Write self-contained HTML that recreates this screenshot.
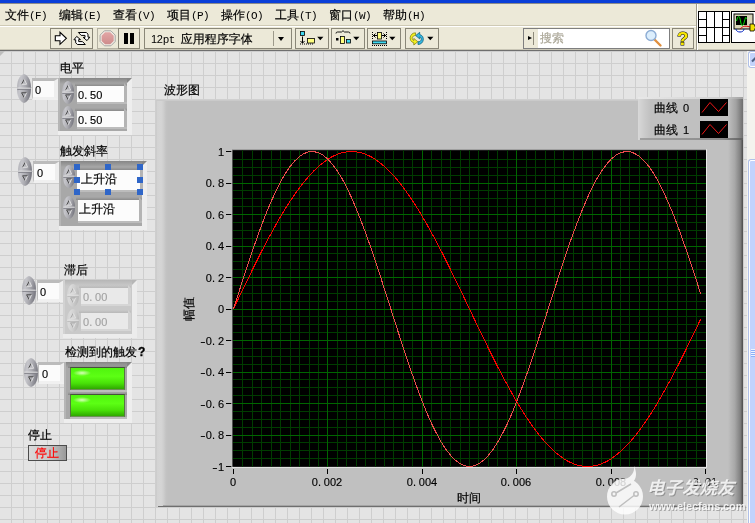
<!DOCTYPE html><html><head><meta charset="utf-8"><title>LabVIEW</title><style>
*{box-sizing:border-box}
html,body{margin:0;padding:0}
body{width:755px;height:523px;overflow:hidden;position:relative;background:#ECE9D8;font-family:"Liberation Mono","WenQuanYi Zen Hei",sans-serif;font-size:12px;line-height:12px;color:#000}
.a{position:absolute}
.m{font-size:11px;letter-spacing:-0.6px;-webkit-text-stroke:0}
.p{letter-spacing:2.9px}
.n{display:inline-block;width:6px;text-align:center;transform:scaleX(1.45)}
.d{font-family:"Liberation Sans",sans-serif;font-size:11px}
.t{position:absolute;white-space:nowrap;height:12px;line-height:12px;will-change:transform;-webkit-text-stroke:0.2px currentColor}
.tb{position:absolute;top:28px;height:21px;border:1px solid #8A8778;background:#ECE9D8}
#panel{position:absolute;left:0;top:51px;width:747px;height:472px;background-color:#E4E4E4;
 background-image:linear-gradient(to right,#CECECE 1px,transparent 1px),linear-gradient(to bottom,#CECECE 1px,transparent 1px);
 background-size:12px 12px;background-position:-1px 0px}
.fld{position:absolute;background:#FCFCFC}
.idx{position:absolute;width:27px;height:22px;background:#FBFBFB;border-top:3px solid #BBBBBB;border-left:1px solid #BEBEBE;border-right:5px solid #EEEEEE;border-bottom:3px solid #F0F0F0}
.h{position:absolute;width:6px;height:6px;background:#2F66C8}
</style></head><body>
<div class="a" style="left:0;top:0;width:755px;height:3px;background:#0A3FD9"></div>
<div class="a" style="left:0;top:3px;width:755px;height:1px;background:#8C8C8C"></div>
<div class="t" style="left:5px;top:10px">文件<span class="m">(F)</span></div>
<div class="t" style="left:59px;top:10px">编辑<span class="m">(E)</span></div>
<div class="t" style="left:113px;top:10px">查看<span class="m">(V)</span></div>
<div class="t" style="left:167px;top:10px">项目<span class="m">(P)</span></div>
<div class="t" style="left:221px;top:10px">操作<span class="m">(O)</span></div>
<div class="t" style="left:275px;top:10px">工具<span class="m">(T)</span></div>
<div class="t" style="left:329px;top:10px">窗口<span class="m">(W)</span></div>
<div class="t" style="left:383px;top:10px">帮助<span class="m">(H)</span></div>
<div class="a" style="left:0;top:25px;width:697px;height:1px;background:#CFCAB5"></div>
<div class="a" style="left:0;top:26px;width:697px;height:1px;background:#FFFFFF"></div>
<div class="a" style="left:0;top:49px;width:755px;height:1px;background:#C9C6B6"></div>
<div class="a" style="left:0;top:50px;width:755px;height:1px;background:#6F6F6F"></div>
<div class="tb" style="left:50px;width:22px"><svg class="a" style="left:0;top:0" width="20" height="19" viewBox="51 29 20 19"><path d="M55.300 35.800H60V32.300L66.400 38.300L60 44.300V40.800H55.300Z" fill="#fff" stroke="#000" stroke-width="1.100"/></svg></div>
<div class="tb" style="left:71px;width:22px"><svg class="a" style="left:0;top:0" width="20" height="19" viewBox="72 29 20 19"><path d="M78.400 32.500H86.300L88 34.200V37.200H89.800L87 40.600L83.200 37.400H85V35.400H81.200Z" fill="#fff" stroke="#000" stroke-width="1" stroke-linejoin="round"/><path d="M85.300 44.500H77.400L75.700 42.800V39.800H73.900L76.700 36.400L80.500 39.600H78.700V41.600H82.500Z" fill="#fff" stroke="#000" stroke-width="1" stroke-linejoin="round"/></svg></div>
<div class="tb" style="left:97px;width:22px;border-color:#B4B1A2"><svg class="a" style="left:0;top:0" width="20" height="19" viewBox="98 29 20 19"><defs><linearGradient id="ab" x1="0" y1="0" x2="0" y2="1"><stop offset="0" stop-color="#E2A6A6"/><stop offset="1" stop-color="#CE8C8C"/></linearGradient></defs><path d="M104.400 30.800H110.900L115.200 35.100V41.500L110.900 45.800H104.400L100.100 41.500V35.100Z" fill="#F2EEE6" stroke="#9C9C9C" stroke-width="0.900"/><path d="M105 32.300H110.300L113.700 35.700V40.900L110.300 44.300H105L101.600 40.900V35.700Z" fill="url(#ab)"/></svg></div>
<div class="tb" style="left:118px;width:22px"><div class="a" style="left:5px;top:4px;width:3.500px;height:10.500px;background:#000"></div><div class="a" style="left:11.200px;top:4px;width:3.500px;height:10.500px;background:#000"></div></div>
<div class="tb" style="left:144px;width:148px"><div class="t" style="left:6px;top:4px"><span class="d" style="-webkit-text-stroke:0;letter-spacing:-0.300px">12</span><span class="m">pt&nbsp;</span>应用程序字体</div><div class="a" style="left:128px;top:2px;width:1px;height:15px;background:#9D9A8B"></div><div class="a" style="left:133px;top:8px;width:0;height:0;border-left:3.500px solid transparent;border-right:3.500px solid transparent;border-top:4px solid #000"></div></div>
<div class="tb" style="left:295px;width:34px"><svg class="a" style="left:0;top:0" width="32" height="19" viewBox="296 29 32 19"><rect x="300.500" y="31.500" width="4" height="4" fill="#3FD8F0" stroke="#000" stroke-width="0.800"/><path d="M302.500 36.500V43M300.500 41l2 2.200 2-2.200" stroke="#000" stroke-width="1" fill="none"/><path d="M300 44h14" stroke="#000" stroke-width="1" stroke-dasharray="1 1"/><rect x="307.500" y="38.500" width="7" height="4.500" fill="#FFFF80" stroke="#000" stroke-width="0.800"/><path d="M317.2 36.700h6.200l-3.100 3.500z" fill="#000"/></svg></div>
<div class="tb" style="left:331px;width:34px"><svg class="a" style="left:0;top:0" width="32" height="19" viewBox="332 29 32 19"><path d="M336 33.500q0-1.500 1.500-1.500h4l1.500-1.300 1.500 1.300h4q1.500 0 1.500 1.500" stroke="#000" stroke-width="0.900" fill="none"/><rect x="336" y="38" width="2.500" height="2.500" fill="#000"/><rect x="340.500" y="36.500" width="4" height="7" fill="#FFFF80" stroke="#000" stroke-width="0.800"/><rect x="346.500" y="39.500" width="4" height="3.500" fill="#3FD8F0" stroke="#000" stroke-width="0.800"/><path d="M353.2 36.700h6.200l-3.100 3.500z" fill="#000"/></svg></div>
<div class="tb" style="left:367px;width:34px"><svg class="a" style="left:0;top:0" width="32" height="19" viewBox="368 29 32 19"><path d="M372.500 32v7M386.500 32v7" stroke="#000" stroke-width="1" stroke-dasharray="1 1"/><path d="M373 35.500h4M386 35.500h-4M375.500 33.500l-2 2 2 2M383.500 33.500l2 2-2 2" stroke="#000" stroke-width="1" fill="none"/><rect x="377.500" y="32.500" width="4" height="6.500" fill="#FFFF80" stroke="#000" stroke-width="0.800"/><rect x="372.500" y="41" width="14" height="2.800" fill="#3FD8F0" stroke="#000" stroke-width="0.800"/><path d="M372 45.500h15" stroke="#000" stroke-width="1" stroke-dasharray="1 1"/><path d="M389.2 36.700h6.200l-3.100 3.500z" fill="#000"/></svg></div>
<div class="tb" style="left:405px;width:34px"><svg class="a" style="left:0;top:0" width="32" height="19" viewBox="406 29 32 19"><path d="M415.500 32.800c-6 0-7.500 8.500-1.700 10v2.200l4-3.300-4-3.300v2.100c-2.500-1-2-5 1.700-5z" fill="#F4F020" stroke="#77770A" stroke-width="0.700"/><path d="M418 44.500c6 0 7.500-8.500 1.700-10v-2.200l-4 3.300 4 3.300v-2.100c2.500 1 2 5-1.700 5z" fill="#38B8E0" stroke="#005878" stroke-width="0.700"/><path d="M427.2 36.700h6.200l-3.100 3.500z" fill="#000"/></svg></div>
<div class="tb" style="left:523px;width:147px;background:#fff;border-color:#7F7F7F"><div class="a" style="left:0;top:0;width:14px;height:19px;background:#ECE9D8"></div><div class="a" style="left:4px;top:7px;width:0;height:0;border-top:2.500px solid transparent;border-bottom:2.500px solid transparent;border-left:4px solid #000"></div><div class="a" style="left:9px;top:3px;width:1px;height:13px;background:#8E8B7C"></div><div class="t" style="left:16px;top:4px;color:#ACA899">搜索</div><svg class="a" style="left:120px;top:0px" width="20" height="19" viewBox="0 0 20 19"><path d="M10 10l6.500 6.500" stroke="#E09040" stroke-width="2.400" stroke-linecap="round"/><circle cx="7" cy="6.500" r="5" fill="#DCEEFC" stroke="#8CACD4" stroke-width="1.400"/></svg></div>
<div class="tb" style="left:672px;width:22px"><div class="t d" style="left:4px;top:0px;height:19px;line-height:19px;font-weight:bold;font-size:19px;color:#F8E800;-webkit-text-stroke:1px #000;paint-order:stroke fill">?</div></div>
<div class="a" style="left:696px;top:4px;width:1px;height:46px;background:#9D9A8B"></div><div class="a" style="left:697px;top:4px;width:1px;height:46px;background:#fff"></div>
<svg class="a" style="left:698px;top:11px" width="32" height="32" viewBox="0 0 32 32"><rect x="0.500" y="0.500" width="31" height="31" fill="#fff" stroke="#000"/><path d="M8.500 0v32M16.500 0v32M24.500 0v32M0 16.500h32M0 8.500h8.500M0 24.500h8.500M24.500 8.500h8M24.500 24.500h8" stroke="#000" stroke-width="1" fill="none"/></svg>
<svg class="a" style="left:731px;top:11px" width="32" height="32" viewBox="0 0 32 32"><rect x="0.500" y="0.500" width="31" height="31" fill="#fff" stroke="#000"/><rect x="3" y="3" width="19" height="15" fill="#D8D4B8" stroke="#000" stroke-width="1"/><rect x="5" y="5" width="11" height="9" fill="#000"/><path d="M5.500 10c1.500-6 3-6 4 0s2.500 6 4 0 1.500-3 2-2" stroke="#00E000" stroke-width="1" fill="none"/><path d="M5 18c0 4 8 4 8 0" stroke="#0020C0" stroke-width="1" fill="none"/><path d="M9 18c2-2 4-4 10-2" stroke="#E00000" stroke-width="1" fill="none"/><path d="M19 13h4l1.500 3.500-1.500 3.500h-4z" fill="#F0E000" stroke="#000" stroke-width="0.800"/></svg>
<div id="panel"></div>
<div class="a" style="left:0;top:51px;width:0;height:0;border-top:5px solid #BEBEBE;border-right:5px solid transparent"></div>
<div class="a" style="left:747px;top:51px;width:8px;height:472px;background:#F4F3EE"></div>
<div class="a" style="left:749px;top:52px;width:17px;height:15px;background:#C3D3FB;border:1px solid #fff;border-radius:2px;box-shadow:0 0 0 1px #B0C0E8"></div>
<svg class="a" style="left:749px;top:52px" width="6" height="15" viewBox="0 0 6 15"><path d="M3 9.5l5-5" stroke="#4D6185" stroke-width="2" fill="none"/></svg>
<div class="a" style="left:749px;top:160px;width:17px;height:370px;background:#C3D3FD;border:1px solid #fff;border-radius:2px;box-shadow:0 0 0 1px #B0C0E8"></div>
<div class="a" style="left:751px;top:349px;width:4px;height:1px;background:#EEF4FE;box-shadow:0 1px 0 #8CB0F8,0 2px 0 #EEF4FE,0 3px 0 #8CB0F8,0 4px 0 #EEF4FE,0 5px 0 #8CB0F8,0 6px 0 #EEF4FE,0 7px 0 #8CB0F8"></div>
<div class="t" style="left:60px;top:63px;color:#000;">电平</div>
<div class="idx" style="left:32px;top:78px"></div>
<svg class="a" style="left:17px;top:74px" width="14" height="29" viewBox="0 0 14 29"><defs><linearGradient id="g17_74" x1="0" y1="0" x2="1" y2="0.25"><stop offset="0" stop-color="#AAAAB0"/><stop offset="0.3" stop-color="#C6C6CB"/><stop offset="0.65" stop-color="#AAAAB0"/><stop offset="1" stop-color="#7E7E86"/></linearGradient></defs><path d="M7.0 0 C12.04 1.305 14 7.83 14 14.5 C14 21.169999999999998 12.04 27.695 7.0 29 C1.9600000000000002 27.695 0 21.169999999999998 0 14.5 C0 7.83 1.9600000000000002 1.305 7.0 0Z" fill="url(#g17_74)"/><rect x="0.3" y="13.7" width="13.4" height="1.1" fill="#ECECEC"/><rect x="0.3" y="14.8" width="13.4" height="1" fill="#7E7E86"/><path d="M7.3 5.22 L4.6 10.219999999999999" stroke="#4A4A4A" stroke-width="1" fill="none"/><path d="M7.3 5.22 L9.6 10.219999999999999 L4.6 10.219999999999999" stroke="#E8E8E8" stroke-width="0.9" fill="none"/><path d="M4.6 18.78 L9.6 18.78 M4.6 18.78 L7.3 23.78" stroke="#4A4A4A" stroke-width="1" fill="none"/><path d="M9.6 18.78 L7.3 23.78" stroke="#E8E8E8" stroke-width="0.9" fill="none"/></svg>
<div class="t d" style="left:34.8px;top:84.3px;color:#000;-webkit-text-stroke:0.15px #000;">0</div>
<div class="a" style="left:58px;top:78px;width:74px;height:57px;background:#EEEEEE"></div>
<div class="a" style="left:58px;top:78px;width:69px;height:53px;background:linear-gradient(to bottom,#868686 0,#A2A2A2 5px,#A8A8A8 6px,#A8A8A8 100%);border-left:2px solid #B6B6B6"></div>
<div class="a" style="left:127px;top:78px;width:0;height:0;border-top:5px solid #868686;border-right:5px solid transparent"></div>
<div class="a" style="left:75px;top:83px;width:52px;height:3px;background:linear-gradient(to bottom,#8A8A8A00,#8A8A8A)"></div>
<div class="a" style="left:77px;top:102px;width:50px;height:2px;background:#BCBCBC"></div>
<div class="a" style="left:124px;top:86px;width:3px;height:16px;background:#B4B4B4"></div>
<div class="a" style="left:124px;top:83px;width:0;height:0;border-bottom:3px solid #B4B4B4;border-right:3px solid transparent"></div>
<div class="fld" style="left:77px;top:86px;width:47px;height:16px;background:#FCFCFC"></div>
<svg class="a" style="left:62px;top:81px" width="12" height="23" viewBox="0 0 12 23"><defs><linearGradient id="g62_81" x1="0" y1="0" x2="1" y2="0.25"><stop offset="0" stop-color="#AAAAB0"/><stop offset="0.3" stop-color="#C6C6CB"/><stop offset="0.65" stop-color="#AAAAB0"/><stop offset="1" stop-color="#7E7E86"/></linearGradient></defs><path d="M6.0 0 C10.32 1.035 12 6.210000000000001 12 11.5 C12 16.79 10.32 21.965 6.0 23 C1.6800000000000002 21.965 0 16.79 0 11.5 C0 6.210000000000001 1.6800000000000002 1.035 6.0 0Z" fill="url(#g62_81)"/><rect x="0.3" y="10.7" width="11.4" height="1.1" fill="#ECECEC"/><rect x="0.3" y="11.8" width="11.4" height="1" fill="#7E7E86"/><path d="M6.3 4.14 L3.6 9.14" stroke="#4A4A4A" stroke-width="1" fill="none"/><path d="M6.3 4.14 L8.6 9.14 L3.6 9.14" stroke="#E8E8E8" stroke-width="0.9" fill="none"/><path d="M3.6 13.86 L8.6 13.86 M3.6 13.86 L6.3 18.86" stroke="#4A4A4A" stroke-width="1" fill="none"/><path d="M8.6 13.86 L6.3 18.86" stroke="#E8E8E8" stroke-width="0.9" fill="none"/></svg>
<div class="t d" style="left:77.8px;top:89px;color:#000;-webkit-text-stroke:0.15px #000;">0<span class="p">.</span>50</div>
<div class="a" style="left:75px;top:108px;width:52px;height:3px;background:linear-gradient(to bottom,#8A8A8A00,#8A8A8A)"></div>
<div class="a" style="left:77px;top:127px;width:50px;height:2px;background:#BCBCBC"></div>
<div class="a" style="left:124px;top:111px;width:3px;height:16px;background:#B4B4B4"></div>
<div class="a" style="left:124px;top:108px;width:0;height:0;border-bottom:3px solid #B4B4B4;border-right:3px solid transparent"></div>
<div class="fld" style="left:77px;top:111px;width:47px;height:16px;background:#FCFCFC"></div>
<svg class="a" style="left:62px;top:106px" width="12" height="23" viewBox="0 0 12 23"><defs><linearGradient id="g62_106" x1="0" y1="0" x2="1" y2="0.25"><stop offset="0" stop-color="#AAAAB0"/><stop offset="0.3" stop-color="#C6C6CB"/><stop offset="0.65" stop-color="#AAAAB0"/><stop offset="1" stop-color="#7E7E86"/></linearGradient></defs><path d="M6.0 0 C10.32 1.035 12 6.210000000000001 12 11.5 C12 16.79 10.32 21.965 6.0 23 C1.6800000000000002 21.965 0 16.79 0 11.5 C0 6.210000000000001 1.6800000000000002 1.035 6.0 0Z" fill="url(#g62_106)"/><rect x="0.3" y="10.7" width="11.4" height="1.1" fill="#ECECEC"/><rect x="0.3" y="11.8" width="11.4" height="1" fill="#7E7E86"/><path d="M6.3 4.14 L3.6 9.14" stroke="#4A4A4A" stroke-width="1" fill="none"/><path d="M6.3 4.14 L8.6 9.14 L3.6 9.14" stroke="#E8E8E8" stroke-width="0.9" fill="none"/><path d="M3.6 13.86 L8.6 13.86 M3.6 13.86 L6.3 18.86" stroke="#4A4A4A" stroke-width="1" fill="none"/><path d="M8.6 13.86 L6.3 18.86" stroke="#E8E8E8" stroke-width="0.9" fill="none"/></svg>
<div class="t d" style="left:77.8px;top:114px;color:#000;-webkit-text-stroke:0.15px #000;">0<span class="p">.</span>50</div>
<div class="t" style="left:60px;top:146px;color:#000;">触发斜率</div>
<div class="idx" style="left:33px;top:161px"></div>
<svg class="a" style="left:18px;top:157px" width="14" height="29" viewBox="0 0 14 29"><defs><linearGradient id="g18_157" x1="0" y1="0" x2="1" y2="0.25"><stop offset="0" stop-color="#AAAAB0"/><stop offset="0.3" stop-color="#C6C6CB"/><stop offset="0.65" stop-color="#AAAAB0"/><stop offset="1" stop-color="#7E7E86"/></linearGradient></defs><path d="M7.0 0 C12.04 1.305 14 7.83 14 14.5 C14 21.169999999999998 12.04 27.695 7.0 29 C1.9600000000000002 27.695 0 21.169999999999998 0 14.5 C0 7.83 1.9600000000000002 1.305 7.0 0Z" fill="url(#g18_157)"/><rect x="0.3" y="13.7" width="13.4" height="1.1" fill="#ECECEC"/><rect x="0.3" y="14.8" width="13.4" height="1" fill="#7E7E86"/><path d="M7.3 5.22 L4.6 10.219999999999999" stroke="#4A4A4A" stroke-width="1" fill="none"/><path d="M7.3 5.22 L9.6 10.219999999999999 L4.6 10.219999999999999" stroke="#E8E8E8" stroke-width="0.9" fill="none"/><path d="M4.6 18.78 L9.6 18.78 M4.6 18.78 L7.3 23.78" stroke="#4A4A4A" stroke-width="1" fill="none"/><path d="M9.6 18.78 L7.3 23.78" stroke="#E8E8E8" stroke-width="0.9" fill="none"/></svg>
<div class="t d" style="left:36.5px;top:167.3px;color:#000;-webkit-text-stroke:0.15px #000;">0</div>
<div class="a" style="left:59px;top:161px;width:88px;height:69px;background:#EEEEEE"></div>
<div class="a" style="left:59px;top:161px;width:83px;height:65px;background:linear-gradient(to bottom,#868686 0,#A2A2A2 5px,#A8A8A8 6px,#A8A8A8 100%);border-left:2px solid #B6B6B6"></div>
<div class="a" style="left:142px;top:161px;width:0;height:0;border-top:5px solid #868686;border-right:5px solid transparent"></div>
<div class="a" style="left:75px;top:167px;width:68px;height:3px;background:linear-gradient(to bottom,#8A8A8A00,#8A8A8A)"></div>
<div class="a" style="left:77px;top:190px;width:66px;height:2px;background:#BCBCBC"></div>
<div class="a" style="left:140px;top:170px;width:3px;height:20px;background:#B4B4B4"></div>
<div class="a" style="left:140px;top:167px;width:0;height:0;border-bottom:3px solid #B4B4B4;border-right:3px solid transparent"></div>
<div class="fld" style="left:77px;top:170px;width:63px;height:20px;background:#FCFCFC"></div>
<svg class="a" style="left:63px;top:165px" width="12" height="23" viewBox="0 0 12 23"><defs><linearGradient id="g63_165" x1="0" y1="0" x2="1" y2="0.25"><stop offset="0" stop-color="#AAAAB0"/><stop offset="0.3" stop-color="#C6C6CB"/><stop offset="0.65" stop-color="#AAAAB0"/><stop offset="1" stop-color="#7E7E86"/></linearGradient></defs><path d="M6.0 0 C10.32 1.035 12 6.210000000000001 12 11.5 C12 16.79 10.32 21.965 6.0 23 C1.6800000000000002 21.965 0 16.79 0 11.5 C0 6.210000000000001 1.6800000000000002 1.035 6.0 0Z" fill="url(#g63_165)"/><rect x="0.3" y="10.7" width="11.4" height="1.1" fill="#ECECEC"/><rect x="0.3" y="11.8" width="11.4" height="1" fill="#7E7E86"/><path d="M6.3 4.14 L3.6 9.14" stroke="#4A4A4A" stroke-width="1" fill="none"/><path d="M6.3 4.14 L8.6 9.14 L3.6 9.14" stroke="#E8E8E8" stroke-width="0.9" fill="none"/><path d="M3.6 13.86 L8.6 13.86 M3.6 13.86 L6.3 18.86" stroke="#4A4A4A" stroke-width="1" fill="none"/><path d="M8.6 13.86 L6.3 18.86" stroke="#E8E8E8" stroke-width="0.9" fill="none"/></svg>
<div class="t" style="left:81px;top:173.5px;color:#000;">上升沿</div>
<div class="a" style="left:76px;top:197px;width:66px;height:3px;background:linear-gradient(to bottom,#8A8A8A00,#8A8A8A)"></div>
<div class="a" style="left:78px;top:221px;width:64px;height:2px;background:#BCBCBC"></div>
<div class="a" style="left:139px;top:200px;width:3px;height:21px;background:#B4B4B4"></div>
<div class="a" style="left:139px;top:197px;width:0;height:0;border-bottom:3px solid #B4B4B4;border-right:3px solid transparent"></div>
<div class="fld" style="left:78px;top:200px;width:61px;height:21px;background:#FCFCFC"></div>
<svg class="a" style="left:63px;top:196px" width="12" height="23" viewBox="0 0 12 23"><defs><linearGradient id="g63_196" x1="0" y1="0" x2="1" y2="0.25"><stop offset="0" stop-color="#AAAAB0"/><stop offset="0.3" stop-color="#C6C6CB"/><stop offset="0.65" stop-color="#AAAAB0"/><stop offset="1" stop-color="#7E7E86"/></linearGradient></defs><path d="M6.0 0 C10.32 1.035 12 6.210000000000001 12 11.5 C12 16.79 10.32 21.965 6.0 23 C1.6800000000000002 21.965 0 16.79 0 11.5 C0 6.210000000000001 1.6800000000000002 1.035 6.0 0Z" fill="url(#g63_196)"/><rect x="0.3" y="10.7" width="11.4" height="1.1" fill="#ECECEC"/><rect x="0.3" y="11.8" width="11.4" height="1" fill="#7E7E86"/><path d="M6.3 4.14 L3.6 9.14" stroke="#4A4A4A" stroke-width="1" fill="none"/><path d="M6.3 4.14 L8.6 9.14 L3.6 9.14" stroke="#E8E8E8" stroke-width="0.9" fill="none"/><path d="M3.6 13.86 L8.6 13.86 M3.6 13.86 L6.3 18.86" stroke="#4A4A4A" stroke-width="1" fill="none"/><path d="M8.6 13.86 L6.3 18.86" stroke="#E8E8E8" stroke-width="0.9" fill="none"/></svg>
<div class="t" style="left:79px;top:204px;color:#000;">上升沿</div>
<div class="h" style="left:74px;top:164px"></div>
<div class="h" style="left:74px;top:177px"></div>
<div class="h" style="left:74px;top:189px"></div>
<div class="h" style="left:105px;top:164px"></div>
<div class="h" style="left:105px;top:189px"></div>
<div class="h" style="left:137px;top:164px"></div>
<div class="h" style="left:137px;top:177px"></div>
<div class="h" style="left:137px;top:189px"></div>
<div class="t" style="left:64px;top:265px;color:#000;">滞后</div>
<div class="idx" style="left:37px;top:280px"></div>
<svg class="a" style="left:22px;top:276px" width="14" height="29" viewBox="0 0 14 29"><defs><linearGradient id="g22_276" x1="0" y1="0" x2="1" y2="0.25"><stop offset="0" stop-color="#AAAAB0"/><stop offset="0.3" stop-color="#C6C6CB"/><stop offset="0.65" stop-color="#AAAAB0"/><stop offset="1" stop-color="#7E7E86"/></linearGradient></defs><path d="M7.0 0 C12.04 1.305 14 7.83 14 14.5 C14 21.169999999999998 12.04 27.695 7.0 29 C1.9600000000000002 27.695 0 21.169999999999998 0 14.5 C0 7.83 1.9600000000000002 1.305 7.0 0Z" fill="url(#g22_276)"/><rect x="0.3" y="13.7" width="13.4" height="1.1" fill="#ECECEC"/><rect x="0.3" y="14.8" width="13.4" height="1" fill="#7E7E86"/><path d="M7.3 5.22 L4.6 10.219999999999999" stroke="#4A4A4A" stroke-width="1" fill="none"/><path d="M7.3 5.22 L9.6 10.219999999999999 L4.6 10.219999999999999" stroke="#E8E8E8" stroke-width="0.9" fill="none"/><path d="M4.6 18.78 L9.6 18.78 M4.6 18.78 L7.3 23.78" stroke="#4A4A4A" stroke-width="1" fill="none"/><path d="M9.6 18.78 L7.3 23.78" stroke="#E8E8E8" stroke-width="0.9" fill="none"/></svg>
<div class="t d" style="left:40.3px;top:286.3px;color:#000;-webkit-text-stroke:0.15px #000;">0</div>
<div class="a" style="left:63px;top:280px;width:74px;height:58px;background:#ECECEC"></div>
<div class="a" style="left:63px;top:280px;width:69px;height:54px;background:linear-gradient(to bottom,#B6B6B6 0,#C6C6C6 5px,#C9C9C9 6px,#C9C9C9 100%);border-left:2px solid #D2D2D2"></div>
<div class="a" style="left:132px;top:280px;width:0;height:0;border-top:5px solid #B6B6B6;border-right:5px solid transparent"></div>
<div class="a" style="left:79px;top:285px;width:52px;height:3px;background:linear-gradient(to bottom,#B8B8B800,#B8B8B8)"></div>
<div class="a" style="left:81px;top:304px;width:50px;height:2px;background:#D6D6D6"></div>
<div class="a" style="left:128px;top:288px;width:3px;height:16px;background:#D2D2D2"></div>
<div class="a" style="left:128px;top:285px;width:0;height:0;border-bottom:3px solid #D2D2D2;border-right:3px solid transparent"></div>
<div class="fld" style="left:81px;top:288px;width:47px;height:16px;background:#E9E9E9"></div>
<svg class="a" style="left:67px;top:284px" width="12" height="23" viewBox="0 0 12 23"><defs><linearGradient id="g67_284" x1="0" y1="0" x2="1" y2="0.25"><stop offset="0" stop-color="#CECECE"/><stop offset="0.3" stop-color="#DADADA"/><stop offset="0.65" stop-color="#CECECE"/><stop offset="1" stop-color="#BABABA"/></linearGradient></defs><path d="M6.0 0 C10.32 1.035 12 6.210000000000001 12 11.5 C12 16.79 10.32 21.965 6.0 23 C1.6800000000000002 21.965 0 16.79 0 11.5 C0 6.210000000000001 1.6800000000000002 1.035 6.0 0Z" fill="url(#g67_284)"/><rect x="0.3" y="10.7" width="11.4" height="1.1" fill="#ECECEC"/><rect x="0.3" y="11.8" width="11.4" height="1" fill="#BABABA"/><path d="M6.3 4.14 L3.6 9.14" stroke="#A8A8A8" stroke-width="1" fill="none"/><path d="M6.3 4.14 L8.6 9.14 L3.6 9.14" stroke="#E4E4E4" stroke-width="0.9" fill="none"/><path d="M3.6 13.86 L8.6 13.86 M3.6 13.86 L6.3 18.86" stroke="#A8A8A8" stroke-width="1" fill="none"/><path d="M8.6 13.86 L6.3 18.86" stroke="#E4E4E4" stroke-width="0.9" fill="none"/></svg>
<div class="t d" style="left:82.5px;top:291px;color:#A2A2A2;-webkit-text-stroke:0.15px #A2A2A2;">0<span class="p">.</span>00</div>
<div class="a" style="left:79px;top:310px;width:52px;height:3px;background:linear-gradient(to bottom,#B8B8B800,#B8B8B8)"></div>
<div class="a" style="left:81px;top:329px;width:50px;height:2px;background:#D6D6D6"></div>
<div class="a" style="left:128px;top:313px;width:3px;height:16px;background:#D2D2D2"></div>
<div class="a" style="left:128px;top:310px;width:0;height:0;border-bottom:3px solid #D2D2D2;border-right:3px solid transparent"></div>
<div class="fld" style="left:81px;top:313px;width:47px;height:16px;background:#E9E9E9"></div>
<svg class="a" style="left:67px;top:309px" width="12" height="23" viewBox="0 0 12 23"><defs><linearGradient id="g67_309" x1="0" y1="0" x2="1" y2="0.25"><stop offset="0" stop-color="#CECECE"/><stop offset="0.3" stop-color="#DADADA"/><stop offset="0.65" stop-color="#CECECE"/><stop offset="1" stop-color="#BABABA"/></linearGradient></defs><path d="M6.0 0 C10.32 1.035 12 6.210000000000001 12 11.5 C12 16.79 10.32 21.965 6.0 23 C1.6800000000000002 21.965 0 16.79 0 11.5 C0 6.210000000000001 1.6800000000000002 1.035 6.0 0Z" fill="url(#g67_309)"/><rect x="0.3" y="10.7" width="11.4" height="1.1" fill="#ECECEC"/><rect x="0.3" y="11.8" width="11.4" height="1" fill="#BABABA"/><path d="M6.3 4.14 L3.6 9.14" stroke="#A8A8A8" stroke-width="1" fill="none"/><path d="M6.3 4.14 L8.6 9.14 L3.6 9.14" stroke="#E4E4E4" stroke-width="0.9" fill="none"/><path d="M3.6 13.86 L8.6 13.86 M3.6 13.86 L6.3 18.86" stroke="#A8A8A8" stroke-width="1" fill="none"/><path d="M8.6 13.86 L6.3 18.86" stroke="#E4E4E4" stroke-width="0.9" fill="none"/></svg>
<div class="t d" style="left:82.5px;top:316px;color:#A2A2A2;-webkit-text-stroke:0.15px #A2A2A2;">0<span class="p">.</span>00</div>
<div class="t" style="left:65px;top:346px;color:#000;">检测到的触发<b class="d" style="-webkit-text-stroke:0.3px #000;font-size:12px;padding-left:1px">?</b></div>
<div class="idx" style="left:38px;top:362px"></div>
<svg class="a" style="left:23.5px;top:358px" width="14" height="29" viewBox="0 0 14 29"><defs><linearGradient id="g23_358" x1="0" y1="0" x2="1" y2="0.25"><stop offset="0" stop-color="#AAAAB0"/><stop offset="0.3" stop-color="#C6C6CB"/><stop offset="0.65" stop-color="#AAAAB0"/><stop offset="1" stop-color="#7E7E86"/></linearGradient></defs><path d="M7.0 0 C12.04 1.305 14 7.83 14 14.5 C14 21.169999999999998 12.04 27.695 7.0 29 C1.9600000000000002 27.695 0 21.169999999999998 0 14.5 C0 7.83 1.9600000000000002 1.305 7.0 0Z" fill="url(#g23_358)"/><rect x="0.3" y="13.7" width="13.4" height="1.1" fill="#ECECEC"/><rect x="0.3" y="14.8" width="13.4" height="1" fill="#7E7E86"/><path d="M7.3 5.22 L4.6 10.219999999999999" stroke="#4A4A4A" stroke-width="1" fill="none"/><path d="M7.3 5.22 L9.6 10.219999999999999 L4.6 10.219999999999999" stroke="#E8E8E8" stroke-width="0.9" fill="none"/><path d="M4.6 18.78 L9.6 18.78 M4.6 18.78 L7.3 23.78" stroke="#4A4A4A" stroke-width="1" fill="none"/><path d="M9.6 18.78 L7.3 23.78" stroke="#E8E8E8" stroke-width="0.9" fill="none"/></svg>
<div class="t d" style="left:41.5px;top:368.3px;color:#000;-webkit-text-stroke:0.15px #000;">0</div>
<div class="a" style="left:64px;top:362px;width:68px;height:61px;background:#EEEEEE"></div>
<div class="a" style="left:64px;top:362px;width:63px;height:57px;background:linear-gradient(to bottom,#868686 0,#A2A2A2 5px,#A8A8A8 6px,#A8A8A8 100%);border-left:2px solid #B6B6B6"></div>
<div class="a" style="left:127px;top:362px;width:0;height:0;border-top:5px solid #868686;border-right:5px solid transparent"></div>
<div class="a" style="left:68px;top:365px;width:59px;height:3px;background:linear-gradient(to bottom,#8A8A8A00,#858585)"></div>
<div class="a" style="left:70px;top:390px;width:57px;height:2px;background:#BDBDBD"></div>
<div class="a" style="left:70px;top:367px;width:55px;height:23px;border:1px solid #55763F;border-top-color:#46523C;border-bottom-color:#6B8F55;background:radial-gradient(ellipse 9px 3px at 11px 5px,#D8FFB8 0,rgba(120,255,60,0) 100%),linear-gradient(to bottom,#50F40E 0,#5CFF14 40%,#49E208 72%,#2FA800 100%)"></div>
<div class="a" style="left:68px;top:392px;width:59px;height:3px;background:linear-gradient(to bottom,#8A8A8A00,#858585)"></div>
<div class="a" style="left:70px;top:417px;width:57px;height:2px;background:#BDBDBD"></div>
<div class="a" style="left:70px;top:394px;width:55px;height:23px;border:1px solid #55763F;border-top-color:#46523C;border-bottom-color:#6B8F55;background:radial-gradient(ellipse 9px 3px at 11px 5px,#D8FFB8 0,rgba(120,255,60,0) 100%),linear-gradient(to bottom,#50F40E 0,#5CFF14 40%,#49E208 72%,#2FA800 100%)"></div>
<div class="t" style="left:28px;top:430px;color:#000;">停止</div>
<div class="a" style="left:28px;top:445px;width:39px;height:16px;border:1px solid #4C4C4C;background:linear-gradient(to right,#DADADA 0,#CACACA 50%,#9A9A9A 100%)"></div>
<div class="t" style="left:35px;top:448px;color:#FF0000;">停止</div>
<div class="t" style="left:164px;top:85px;color:#000;">波形图</div>
<div class="a" style="left:156px;top:99px;width:587px;height:408px;background:#C0C0C0"></div>
<div class="a" style="left:156px;top:99px;width:12px;height:408px;background:linear-gradient(to right,#C9C9C9 0,#D3D3D3 1.5px,#D5D5D5 5px,#D0D0D0 7px,#C3C3C3 10px,#C0C0C0 12px)"></div>
<div class="a" style="left:728px;top:99px;width:15px;height:408px;background:linear-gradient(to right,#C0C0C0 0,#A8A8A8 45%,#808080 82%,#4A4A4A 100%)"></div>
<div class="a" style="left:156px;top:99px;width:587px;height:2px;background:linear-gradient(to bottom,#D3D3D3,#C7C7C7)"></div>
<div class="a" style="left:163px;top:505px;width:580px;height:1px;background:#A4A4A4"></div>
<div class="a" style="left:158px;top:506px;width:585px;height:1px;background:#6E6E6E"></div>
<div class="a" style="left:638px;top:97px;width:105px;height:43px;background:linear-gradient(to right,#D8D8D8 0,#CACACA 7px,#C0C0C0 13px,#C0C0C0 90px,#A2A2A2 98px,#6E6E6E 105px)"></div>
<div class="a" style="left:638px;top:97px;width:105px;height:2px;background:linear-gradient(to right,#E8E8E8,#D0D0D0 80%,#A0A0A0)"></div>
<div class="a" style="left:640px;top:138px;width:103px;height:2px;background:linear-gradient(to right,#A0A0A0,#8A8A8A 80%,#606060)"></div>
<div class="t" style="left:654px;top:103px">曲线</div>
<div class="t d" style="left:683px;top:101.8px;color:#000;-webkit-text-stroke:0.15px #000;">0</div>
<svg class="a" style="left:700px;top:99px" width="28" height="17" viewBox="0 0 28 17"><rect width="28" height="17" fill="#000"/><path d="M2 13.500L10 3.500L18.500 12.500L26.500 3.500" stroke="#F01818" stroke-width="1" fill="none"/></svg>
<div class="t" style="left:654px;top:125px">曲线</div>
<div class="t d" style="left:683px;top:123.8px;color:#000;-webkit-text-stroke:0.15px #000;">1</div>
<svg class="a" style="left:700px;top:121px" width="28" height="17" viewBox="0 0 28 17"><rect width="28" height="17" fill="#000"/><path d="M2 13.500L10 3.500L18.500 12.500L26.500 3.500" stroke="#F01818" stroke-width="1" fill="none"/></svg>
<svg class="a" style="left:0;top:0" width="755" height="523" viewBox="0 0 755 523" font-family="Liberation Sans, sans-serif" font-size="12"><rect x="232" y="149.29999999999998" width="475" height="318.5" fill="#EAEAEA"/><rect x="232" y="149.29999999999998" width="474" height="317.5" fill="#858585"/><rect x="232.6" y="150.2" width="473.4" height="316.6" fill="#000"/><path d="M242.5 150.2V466.8M252.5 150.2V466.8M261.5 150.2V466.8M271.5 150.2V466.8M280.5 150.2V466.8M290.5 150.2V466.8M299.5 150.2V466.8M309.5 150.2V466.8M318.5 150.2V466.8M337.5 150.2V466.8M346.5 150.2V466.8M356.5 150.2V466.8M365.5 150.2V466.8M375.5 150.2V466.8M384.5 150.2V466.8M393.5 150.2V466.8M403.5 150.2V466.8M412.5 150.2V466.8M431.5 150.2V466.8M441.5 150.2V466.8M450.5 150.2V466.8M460.5 150.2V466.8M469.5 150.2V466.8M478.5 150.2V466.8M488.5 150.2V466.8M497.5 150.2V466.8M507.5 150.2V466.8M526.5 150.2V466.8M535.5 150.2V466.8M545.5 150.2V466.8M554.5 150.2V466.8M563.5 150.2V466.8M573.5 150.2V466.8M582.5 150.2V466.8M592.5 150.2V466.8M601.5 150.2V466.8M620.5 150.2V466.8M629.5 150.2V466.8M639.5 150.2V466.8M648.5 150.2V466.8M658.5 150.2V466.8M667.5 150.2V466.8M677.5 150.2V466.8M686.5 150.2V466.8M696.5 150.2V466.8M233 159.5H706M233 167.5H706M233 175.5H706M233 190.5H706M233 198.5H706M233 206.5H706M233 222.5H706M233 230.5H706M233 238.5H706M233 253.5H706M233 261.5H706M233 269.5H706M233 285.5H706M233 293.5H706M233 301.5H706M233 316.5H706M233 324.5H706M233 332.5H706M233 348.5H706M233 356.5H706M233 364.5H706M233 379.5H706M233 387.5H706M233 395.5H706M233 411.5H706M233 419.5H706M233 427.5H706M233 442.5H706M233 450.5H706M233 458.5H706" stroke="#003C00" stroke-width="1" fill="none"/><path d="M327.5 150.2V466.8M422.5 150.2V466.8M516.5 150.2V466.8M611.5 150.2V466.8M233 183.5H706M233 214.5H706M233 246.5H706M233 277.5H706M233 309.5H706M233 340.5H706M233 372.5H706M233 403.5H706M233 435.5H706" stroke="#006600" stroke-width="1" fill="none"/><polyline points="233.5,309.0 238.2,299.1 242.9,289.3 247.7,279.5 252.4,269.8 257.1,260.3 261.8,251.0 266.5,241.9 271.3,233.1 276.0,224.6 280.7,216.4 285.4,208.6 290.1,201.2 294.9,194.2 299.6,187.6 304.3,181.6 309.0,176.0 313.7,171.0 318.5,166.5 323.2,162.6 327.9,159.2 332.6,156.4 337.3,154.3 342.1,152.7 346.8,151.8 351.5,151.5 356.2,151.8 360.9,152.7 365.7,154.3 370.4,156.4 375.1,159.2 379.8,162.6 384.5,166.5 389.3,171.0 394.0,176.0 398.7,181.6 403.4,187.6 408.1,194.2 412.9,201.2 417.6,208.6 422.3,216.4 427.0,224.6 431.7,233.1 436.5,241.9 441.2,251.0 445.9,260.3 450.6,269.8 455.3,279.5 460.1,289.3 464.8,299.1 469.5,309.0 474.2,318.9 478.9,328.7 483.7,338.5 488.4,348.2 493.1,357.7 497.8,367.0 502.5,376.1 507.3,384.9 512.0,393.4 516.7,401.6 521.4,409.4 526.1,416.8 530.9,423.8 535.6,430.4 540.3,436.4 545.0,442.0 549.7,447.0 554.5,451.5 559.2,455.4 563.9,458.8 568.6,461.6 573.3,463.7 578.1,465.3 582.8,466.2 587.5,466.5 592.2,466.2 596.9,465.3 601.7,463.7 606.4,461.6 611.1,458.8 615.8,455.4 620.5,451.5 625.3,447.0 630.0,442.0 634.7,436.4 639.4,430.4 644.1,423.8 648.9,416.8 653.6,409.4 658.3,401.6 663.0,393.4 667.7,384.9 672.5,376.1 677.2,367.0 681.9,357.7 686.6,348.2 691.3,338.5 696.1,328.7 700.8,318.9" stroke="#FF0000" stroke-width="1" fill="none" shape-rendering="crispEdges"/><polyline points="233.5,309.0 238.2,294.2 242.9,279.5 247.7,265.1 252.4,251.0 257.1,237.5 261.8,224.6 266.5,212.5 271.3,201.2 276.0,190.9 280.7,181.6 285.4,173.4 290.1,166.5 294.9,160.8 299.6,156.4 304.3,153.4 309.0,151.8 313.7,151.6 318.5,152.7 323.2,155.3 327.9,159.2 332.6,164.5 337.3,171.0 342.1,178.7 346.8,187.6 351.5,197.6 356.2,208.6 360.9,220.5 365.7,233.1 370.4,246.4 375.1,260.3 379.8,274.6 384.5,289.3 389.3,304.1 394.0,318.9 398.7,333.6 403.4,348.2 408.1,362.4 412.9,376.1 417.6,389.2 422.3,401.6 427.0,413.2 431.7,423.8 436.5,433.4 441.2,442.0 445.9,449.3 450.6,455.4 455.3,460.2 460.1,463.7 464.8,465.8 469.5,466.5 474.2,465.8 478.9,463.7 483.7,460.2 488.4,455.4 493.1,449.3 497.8,442.0 502.5,433.4 507.3,423.8 512.0,413.2 516.7,401.6 521.4,389.2 526.1,376.1 530.9,362.4 535.6,348.2 540.3,333.6 545.0,318.9 549.7,304.1 554.5,289.3 559.2,274.6 563.9,260.3 568.6,246.4 573.3,233.1 578.1,220.5 582.8,208.6 587.5,197.6 592.2,187.6 596.9,178.7 601.7,171.0 606.4,164.5 611.1,159.2 615.8,155.3 620.5,152.7 625.3,151.6 630.0,151.8 634.7,153.4 639.4,156.4 644.1,160.8 648.9,166.5 653.6,173.4 658.3,181.6 663.0,190.9 667.7,201.2 672.5,212.5 677.2,224.6 681.9,237.5 686.6,251.0 691.3,265.1 696.1,279.5 700.8,294.2" stroke="#EE4C4C" stroke-width="1" fill="none" shape-rendering="crispEdges"/><path d="M226 151.5H231.3M226 183.5H231.3M226 214.5H231.3M226 246.5H231.3M226 277.5H231.3M226 309.5H231.3M226 340.5H231.3M226 372.5H231.3M226 403.5H231.3M226 435.5H231.3M226 466.5H231.3M233.5 469V474M327.5 469V474M422.5 469V474M516.5 469V474M611.5 469V474M705.5 469V474" stroke="#000" stroke-width="1" fill="none"/></svg>
<div class="t d" style="left:183px;width:41px;text-align:right;top:145.7px;-webkit-text-stroke:0.15px #000">1</div>
<div class="t d" style="left:183px;width:41px;text-align:right;top:177.2px;-webkit-text-stroke:0.15px #000">0<span class="p">.</span>8</div>
<div class="t d" style="left:183px;width:41px;text-align:right;top:208.7px;-webkit-text-stroke:0.15px #000">0<span class="p">.</span>6</div>
<div class="t d" style="left:183px;width:41px;text-align:right;top:240.2px;-webkit-text-stroke:0.15px #000">0<span class="p">.</span>4</div>
<div class="t d" style="left:183px;width:41px;text-align:right;top:271.7px;-webkit-text-stroke:0.15px #000">0<span class="p">.</span>2</div>
<div class="t d" style="left:183px;width:41px;text-align:right;top:303.2px;-webkit-text-stroke:0.15px #000">0</div>
<div class="t d" style="left:183px;width:41px;text-align:right;top:334.7px;-webkit-text-stroke:0.15px #000"><span class="n">-</span>0<span class="p">.</span>2</div>
<div class="t d" style="left:183px;width:41px;text-align:right;top:366.2px;-webkit-text-stroke:0.15px #000"><span class="n">-</span>0<span class="p">.</span>4</div>
<div class="t d" style="left:183px;width:41px;text-align:right;top:397.7px;-webkit-text-stroke:0.15px #000"><span class="n">-</span>0<span class="p">.</span>6</div>
<div class="t d" style="left:183px;width:41px;text-align:right;top:429.2px;-webkit-text-stroke:0.15px #000"><span class="n">-</span>0<span class="p">.</span>8</div>
<div class="t d" style="left:183px;width:41px;text-align:right;top:460.7px;-webkit-text-stroke:0.15px #000"><span class="n">-</span>1</div>
<div class="t d" style="left:203.0px;width:60px;text-align:center;top:476px;-webkit-text-stroke:0.15px #000">0</div>
<div class="t d" style="left:297.4px;width:60px;text-align:center;top:476px;-webkit-text-stroke:0.15px #000">0<span class="p">.</span>002</div>
<div class="t d" style="left:391.8px;width:60px;text-align:center;top:476px;-webkit-text-stroke:0.15px #000">0<span class="p">.</span>004</div>
<div class="t d" style="left:486.2px;width:60px;text-align:center;top:476px;-webkit-text-stroke:0.15px #000">0<span class="p">.</span>006</div>
<div class="t d" style="left:580.6px;width:60px;text-align:center;top:476px;-webkit-text-stroke:0.15px #000">0<span class="p">.</span>008</div>
<div class="t d" style="left:675.0px;width:60px;text-align:center;top:476px;-webkit-text-stroke:0.15px #000">0<span class="p">.</span>01</div>
<div class="t" style="left:457px;top:493px;color:#000;">时间</div>
<div class="t" style="left:178px;top:303px;width:24px;transform:rotate(-90deg);transform-origin:center">幅值</div>
<svg class="a" style="left:600px;top:460px" width="60" height="63" viewBox="600 460 60 63"><g opacity="0.82"><circle cx="625" cy="496.500" r="18" fill="#fff"/><path d="M626 479c5-2 9-7 8-13 3 6 3 13-2 17z" fill="#fff"/></g><g stroke="#BEBEBE" fill="none" stroke-width="1.500"><path d="M616 493L631 484M634 495.500L619 507"/><circle cx="614" cy="494" r="2.200" fill="#F4F4F4"/><circle cx="636" cy="494" r="2.200" fill="#F4F4F4"/></g></svg>
<div class="t" style="left:646.500px;top:478px;height:20px;line-height:20px;font-size:17.500px;font-weight:bold;font-style:italic;color:rgba(255,255,255,0.800);font-family:'Liberation Sans','Noto Sans CJK SC',sans-serif;-webkit-text-stroke:0;text-shadow:1px 1px 0 rgba(90,90,90,0.450)">电子发烧友</div>
<div class="t" style="left:649px;top:500px;font-size:11px;font-weight:bold;color:rgba(255,255,255,0.850);font-family:'Liberation Sans',sans-serif;letter-spacing:-0.100px;-webkit-text-stroke:0;text-shadow:1px 1px 0 rgba(90,90,90,0.450)">www.elecfans.com</div>
</body></html>
